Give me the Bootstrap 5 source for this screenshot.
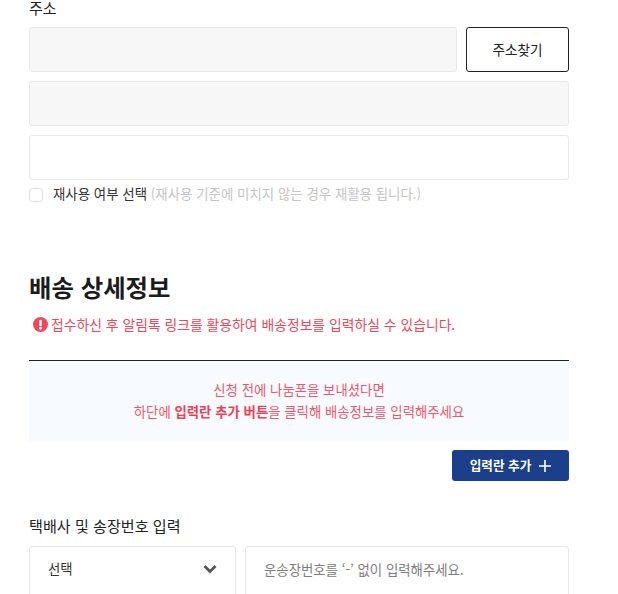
<!DOCTYPE html>
<html lang="ko">
<head>
<meta charset="utf-8">
<title>배송 상세정보</title>
<link href="https://cdn.jsdelivr.net/npm/bootstrap@5.3.0/dist/css/bootstrap.min.css" rel="stylesheet">
<style>
html,body{height:594px;overflow:hidden;background:#fff}
body{font-family:"Noto Sans CJK KR","Liberation Sans",sans-serif;color:#222}
.sheet{width:540px;margin-left:29px}
.fld-label{font-size:15px;line-height:15px;height:15px;margin-bottom:12px;color:#222;display:block}
.fld{height:45px;border:1px solid #e8e8e8;border-radius:3px;font-size:13.4px;box-shadow:none;padding:0 18px}
.fld[readonly]{background:#f7f7f7;border-color:#e8e8e8}
.row-gap{gap:9px}
.stack-gap{margin-top:9px}
.find-btn{width:103px;height:45px;flex:none;border:1px solid #222;border-radius:3px;background:#fff;color:#222;font-size:13.6px;padding:0}
.reuse{margin-top:8px;font-size:13.45px;line-height:14px;height:14px}
.reuse input{width:14px;height:14px;margin:0;border:1px solid #ddd;border-radius:3px;float:none}
.reuse label{color:#333;margin-left:10px;margin-top:-5px}
.reuse span{color:#c4c4c4}
.sec-title{font-size:24.4px;font-weight:700;line-height:30px;margin:70px 0 0;color:#1b1b1b}
.warn{font-size:13.85px;line-height:18px;color:#f0485a;margin-top:13px;padding-left:4px;gap:3px}
.warn svg{flex:none}
.note{margin-top:27px;border-top:1px solid #222;background:#f7faff;height:81px;color:#f0586a;font-size:13.4px;line-height:22px;padding-top:17px}
.note strong{font-weight:700;color:#ee3f55}
.add-btn{width:117px;height:31px;background:#1c3f8c;border:0;border-radius:3px;color:#fff;font-size:12.6px;font-weight:700;padding:0;gap:8px;margin-top:9px}
.add-btn:hover{background:#1c3f8c;color:#fff}
.ship-label{font-size:15.1px;line-height:18px;margin:35px 0 12px;color:#222}
.pick{flex:0 0 207px;width:207px;height:52px;border:1px solid #e8e8e8;border-radius:3px;font-size:13.4px;color:#333;padding:0 18px 7px;background-position:right 18px top 16px;background-size:14px 12px;box-shadow:none;
background-image:url("data:image/svg+xml,%3csvg xmlns='http://www.w3.org/2000/svg' viewBox='0 0 14 10'%3e%3cpath fill='none' stroke='%23555' stroke-width='2.8' d='M1.5 2l5.5 5.5L12.5 2'/%3e%3c/svg%3e")}
.inv{height:52px;padding-bottom:7px}
.inv::placeholder{color:#7d7d7d}
</style>
</head>
<body>
<div class="sheet">
  <label class="fld-label">주소</label>
  <div class="d-flex row-gap">
    <input class="form-control fld flex-grow-1" type="text" readonly aria-label="우편번호">
    <button type="button" class="btn find-btn">주소찾기</button>
  </div>
  <input class="form-control fld stack-gap" type="text" readonly aria-label="주소">
  <input class="form-control fld stack-gap" type="text" aria-label="상세주소">
  <div class="reuse d-flex align-items-center">
    <input class="form-check-input" type="checkbox" id="reuse">
    <label for="reuse" class="form-check-label">재사용 여부 선택 <span>(재사용 기준에 미치지 않는 경우 재활용 됩니다.)</span></label>
  </div>

  <h2 class="sec-title">배송 상세정보</h2>
  <div class="warn d-flex align-items-center">
    <svg width="15" height="15" viewBox="0 0 16 16" aria-hidden="true"><circle cx="8" cy="8" r="8" fill="#f0485a"/><rect x="6.7" y="3" width="2.6" height="6.8" rx="1" fill="#fff"/><circle cx="8" cy="12" r="1.5" fill="#fff"/></svg>
    <span>접수하신 후 알림톡 링크를 활용하여 배송정보를 입력하실 수 있습니다.</span>
  </div>
  <div class="note text-center">
    신청 전에 나눔폰을 보내셨다면<br>
    하단에 <strong>입력란 추가 버튼</strong>을 클릭해 배송정보를 입력해주세요
  </div>
  <div class="d-flex justify-content-end">
    <button type="button" class="btn add-btn d-flex align-items-center justify-content-center">입력란 추가
      <svg width="12" height="12" viewBox="0 0 12 12" aria-hidden="true"><path d="M6 0v12M0 6h12" stroke="#fff" stroke-width="1.6"/></svg>
    </button>
  </div>
  <div class="ship-label">택배사 및 송장번호 입력</div>
  <div class="d-flex row-gap">
    <select class="form-select pick" aria-label="택배사"><option>선택</option></select>
    <input class="form-control fld inv flex-grow-1" type="text" placeholder="운송장번호를 ‘-’ 없이 입력해주세요.">
  </div>
</div>
</body>
</html>
